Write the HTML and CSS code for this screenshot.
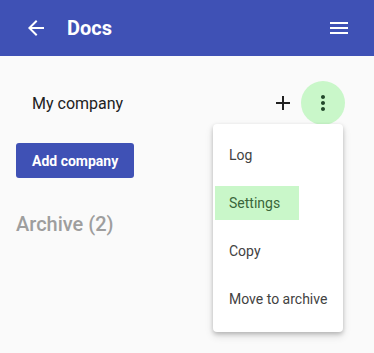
FILE: index.html
```html
<!DOCTYPE html>
<html lang="en">
<head>
    <meta charset="UTF-8">
    <meta name="viewport" content="width=device-width, initial-scale=1.0">
    <title>Docs</title>
    <link rel="stylesheet" href="styles.css">
</head>
<body>
    <header class="toolbar">
        <svg class="icon" viewBox="0 0 24 24"><path d="M20 11H7.83l5.59-5.59L12 4l-8 8 8 8 1.41-1.41L7.83 13H20v-2z"/></svg>
        <h1 class="toolbar-title">Docs</h1>
        <svg class="icon menu-icon" viewBox="0 0 24 24"><path d="M3 18h18v-2H3v2zm0-5h18v-2H3v2zm0-7v2h18V6H3z"/></svg>
    </header>

    <main class="content">
        <div class="company-row">
            <span class="company-name">My company</span>
            <svg class="icon add-icon" viewBox="0 0 24 24"><path d="M19 13h-6v6h-2v-6H5v-2h6V5h2v6h6v2z"/></svg>
            <span class="more-btn">
                <svg class="icon" viewBox="0 0 24 24"><path d="M12 8c1.1 0 2-.9 2-2s-.9-2-2-2-2 .9-2 2 .9 2 2 2zm0 2c-1.1 0-2 .9-2 2s.9 2 2 2 2-.9 2-2-.9-2-2-2zm0 6c-1.1 0-2 .9-2 2s.9 2 2 2 2-.9 2-2-.9-2-2-2z"/></svg>
            </span>
        </div>

        <button class="add-btn">Add company</button>

        <h2 class="archive">Archive (2)</h2>
    </main>

    <ul class="menu">
        <li class="menu-item"><span class="menu-label">Log</span></li>
        <li class="menu-item"><span class="menu-label active">Settings</span></li>
        <li class="menu-item"><span class="menu-label">Copy</span></li>
        <li class="menu-item"><span class="menu-label">Move to archive</span></li>
    </ul>
</body>
</html>
```

FILE: styles.css
```css
body {
    font-family: Roboto, 'Noto Sans', sans-serif;
    background-color: #fafafa;
    margin: 0;
    color: #212121;
}
.icon {
    width: 24px;
    height: 24px;
    fill: currentColor;
    flex-shrink: 0;
}
.toolbar {
    display: flex;
    align-items: center;
    height: 56px;
    padding: 0 23px 0 24px;
    background-color: #3f51b5;
    color: #fff;
}
.toolbar-title {
    margin: 0 0 0 19px;
    font-size: 20px;
    font-weight: 700;
    flex: 1;
}
.content {
    padding: 25px 0 0 16px;
}
.company-row {
    display: flex;
    align-items: center;
    height: 44px;
    padding: 0 29px 0 16px;
}
.company-name {
    flex: 1;
    font-size: 16px;
}
.add-icon {
    margin-right: 6px;
}
.more-btn {
    width: 44px;
    height: 44px;
    border-radius: 50%;
    background-color: #c9f7c9;
    color: #23472b;
    display: flex;
    align-items: center;
    justify-content: center;
}
.add-btn {
    margin-top: 18px;
    height: 35px;
    padding: 0 16px;
    border: none;
    border-radius: 3px;
    background-color: #3f51b5;
    color: #fff;
    font-family: inherit;
    font-size: 14px;
    font-weight: 700;
}
.archive {
    margin: 34px 0 0;
    font-size: 20px;
    font-weight: 500;
    color: #9e9e9e;
}
.menu {
    position: absolute;
    left: 213px;
    top: 124px;
    width: 130px;
    margin: 0;
    padding: 7px 0 9px;
    list-style: none;
    background-color: #fff;
    border-radius: 4px;
    box-shadow: 0 2px 4px rgba(0,0,0,0.2), 0 4px 8px rgba(0,0,0,0.12);
}
.menu-item {
    height: 48px;
    display: flex;
    align-items: center;
    padding: 0 2px;
}
.menu-label {
    display: inline-flex;
    align-items: center;
    height: 34px;
    padding: 0 19px 0 14px;
    font-size: 14px;
    color: #424242;
    white-space: nowrap;
}
.menu-label.active {
    background-color: #c9f7c9;
    color: #3a663a;
}
```
